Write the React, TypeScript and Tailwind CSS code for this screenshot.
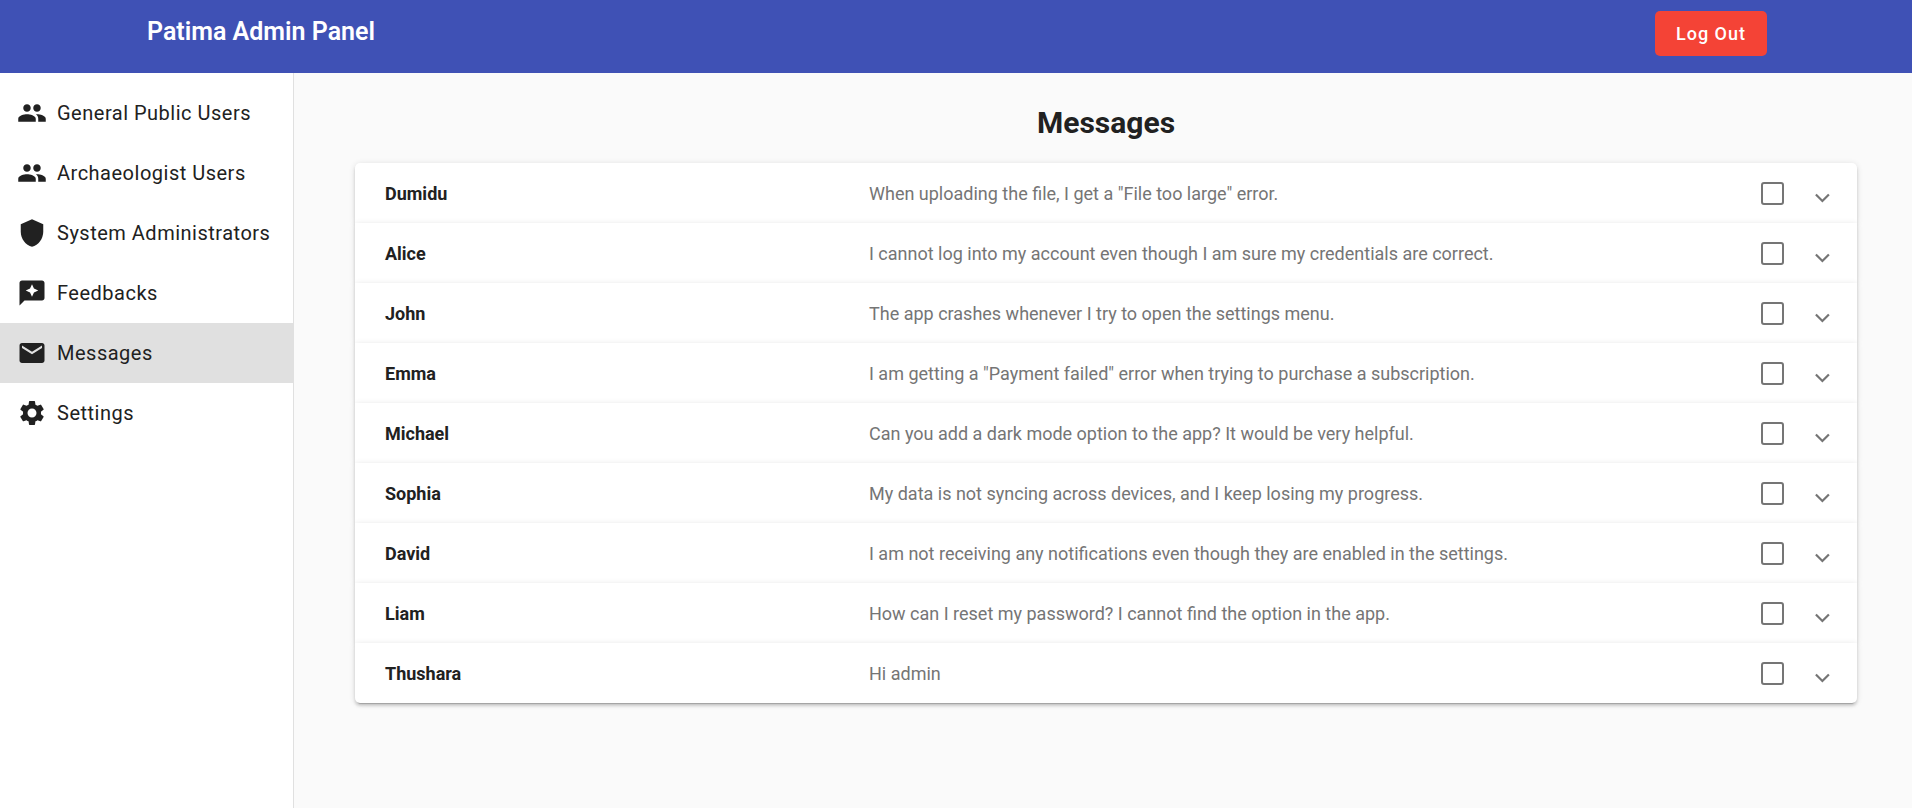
import { useState } from "react";
import type { IconType } from "react-icons";
import { MdGroup, MdShield, MdReviews, MdEmail, MdSettings } from "react-icons/md";

type NavItem = { label: string; icon: IconType; active?: boolean };

const navItems: NavItem[] = [
  { label: "General Public Users", icon: MdGroup },
  { label: "Archaeologist Users", icon: MdGroup },
  { label: "System Administrators", icon: MdShield },
  { label: "Feedbacks", icon: MdReviews },
  { label: "Messages", icon: MdEmail, active: true },
  { label: "Settings", icon: MdSettings },
];

type Message = { name: string; text: string };

const messages: Message[] = [
  { name: "Dumidu", text: 'When uploading the file, I get a "File too large" error.' },
  { name: "Alice", text: "I cannot log into my account even though I am sure my credentials are correct." },
  { name: "John", text: "The app crashes whenever I try to open the settings menu." },
  { name: "Emma", text: 'I am getting a "Payment failed" error when trying to purchase a subscription.' },
  { name: "Michael", text: "Can you add a dark mode option to the app? It would be very helpful." },
  { name: "Sophia", text: "My data is not syncing across devices, and I keep losing my progress." },
  { name: "David", text: "I am not receiving any notifications even though they are enabled in the settings." },
  { name: "Liam", text: "How can I reset my password? I cannot find the option in the app." },
  { name: "Thushara", text: "Hi admin" },
];

function TopBar() {
  return (
    <header className="h-[73px] shrink-0 bg-[#3f51b5] text-white">
      <div className="mx-auto flex max-w-[1650px] items-start justify-between pt-[11px] pr-[14px] pl-4">
        <span className="pt-px text-[25px] leading-10 font-semibold">Patima Admin Panel</span>
        <button
          type="button"
          className="h-[45px] rounded-[5px] bg-[#f44336] px-[21px] text-lg leading-6 font-medium tracking-[1px]"
        >
          Log Out
        </button>
      </div>
    </header>
  );
}

function Sidebar() {
  return (
    <nav className="w-[294px] shrink-0 border-r border-[#e0e0e0] bg-white pt-[10px]">
      {navItems.map(({ label, icon: Icon, active }) => (
        <a
          key={label}
          href="#"
          aria-current={active ? "page" : undefined}
          className={`flex h-[60px] items-center gap-[10px] pl-[17px] text-xl tracking-wide whitespace-nowrap text-[#212121] ${
            active ? "bg-[#e0e0e0]" : ""
          }`}
        >
          <Icon className="size-[30px] shrink-0" />
          {label}
        </a>
      ))}
    </nav>
  );
}

function MessageRow({ message, id }: { message: Message; id: string }) {
  const [open, setOpen] = useState(false);
  return (
    <li className="bg-white shadow-[0_4px_1px_-3px_rgba(0,0,0,0.2),0_3px_3px_0_rgba(0,0,0,0.14),0_1px_6px_0_rgba(0,0,0,0.12)] first:rounded-t-[5px] last:rounded-b-[5px]">
      <div className="flex h-[60px] items-center px-[30px] text-lg">
        <span id={id} className="mr-5 flex-1 pt-0.5 font-bold text-[#212121]">
          {message.name}
        </span>
        <div className="mr-5 flex flex-2 items-center justify-between text-[#757575]">
          <span className="pt-0.5">{message.text}</span>
          <input
            type="checkbox"
            aria-labelledby={id}
            className="mr-[13px] size-[23px] appearance-none rounded-[3px] border-2 border-[#757575] checked:bg-[#3f51b5]"
          />
        </div>
        <button
          type="button"
          aria-expanded={open}
          aria-label={`Show message from ${message.name}`}
          onClick={() => setOpen(!open)}
          className="flex h-full w-[10px] items-center justify-center pt-2.5 text-[#757575]"
        >
          <svg viewBox="0 0 16 10" className="h-[10px] w-4 shrink-0" fill="none" stroke="currentColor" strokeWidth="2.2">
            <path d="M1.9 1.5 8.4 8l6.5-6.5" />
          </svg>
        </button>
      </div>
      {open && <p className="px-[30px] pb-5 text-lg text-[#212121]">{message.text}</p>}
    </li>
  );
}

export default function App() {
  return (
    <div className="flex min-h-screen flex-col bg-[#fafafa] font-[Roboto,sans-serif]">
      <TopBar />
      <div className="flex flex-1">
        <Sidebar />
        <main className="flex-1 pr-[55px] pl-[61px]">
          <h1 className="pt-[30px] pb-5 text-center text-3xl leading-10 font-bold text-[#212121]">Messages</h1>
          <ul>
            {messages.map((message, index) => (
              <MessageRow key={message.name} message={message} id={`sender-${index}`} />
            ))}
          </ul>
        </main>
      </div>
    </div>
  );
}
